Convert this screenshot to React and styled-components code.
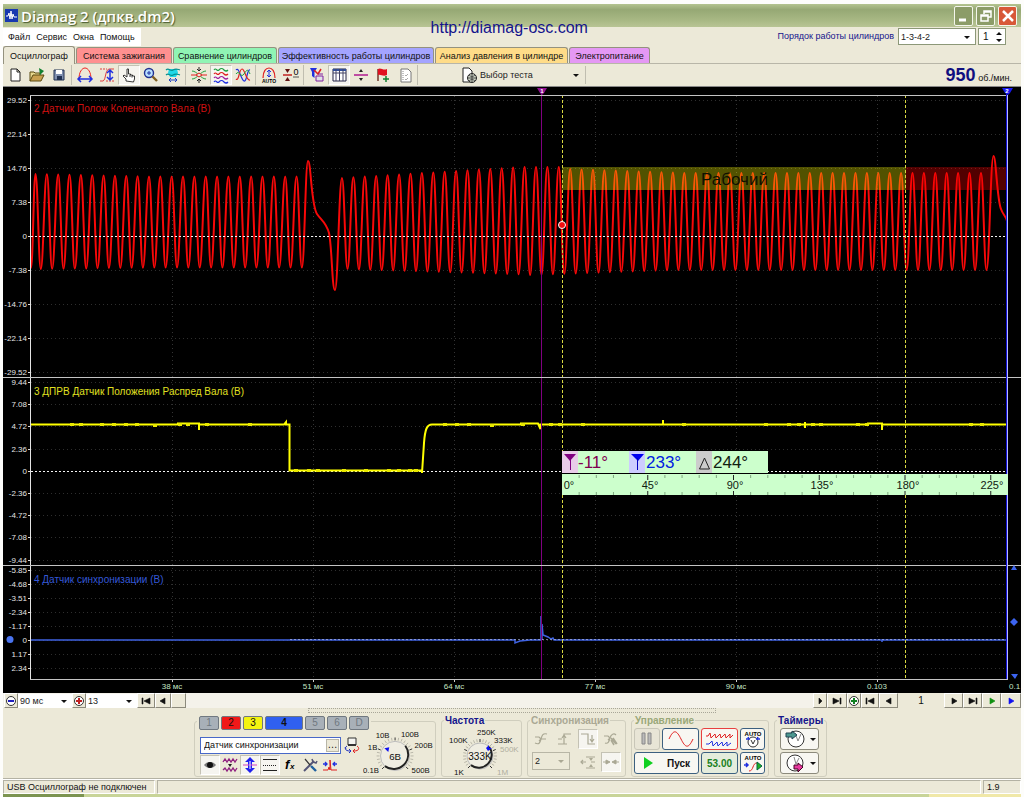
import React, { useState } from "react";
import styled, { createGlobalStyle } from "styled-components";

const GlobalStyle = createGlobalStyle`
  * {
    box-sizing: border-box;
  }
  body {
    margin: 0;
    background: #fdfdfb;
    font-family: "Liberation Sans", sans-serif;
    font-size: 10px;
    color: #111;
  }
  button, select, input {
    font-family: inherit;
    font-size: inherit;
    color: inherit;
    margin: 0;
  }
`;

/* ---------- toolbar icons, 18x18 ---------- */

const icons = {
  new: (
    <path d="M5 3h6l3 3v9H5zM11 3v3h3" fill="#fff" stroke="#222" />
  ),
  open: (
    <>
      <path d="M2 15V6h4l1 1h5v3" fill="#e8d890" stroke="#5a4a10" />
      <path d="M2 15l3-6h11l-3 6z" fill="#c8a050" stroke="#5a4a10" />
      <path d="M11 2l5 3-4 4z" fill="#108030" />
    </>
  ),
  save: (
    <>
      <path d="M4 4h10v10H4z" fill="#8090b0" stroke="#203050" />
      <path d="M6 4h6v4H6z" fill="#fff" />
      <path d="M7 10h5v4H7z" fill="#203050" />
    </>
  ),
  fitX: (
    <>
      <path d="M3 13C3 6 6 2 9 2s6 4 6 11" fill="none" stroke="#f02020" />
      <path d="M2 13h14M5 10l-3 3 3 3M13 10l3 3-3 3" fill="none" stroke="#2030e0" strokeWidth="1.5" />
    </>
  ),
  fitY: (
    <>
      <path d="M2 15h3C8 14 7 4 11 3h5" fill="none" stroke="#e04040" />
      <path d="M2 3h7M8 15h8" fill="none" stroke="#e04040" strokeDasharray="2 1" />
      <path d="M12 4v10M9 7l3-3 3 3M9 11l3 3 3-3" fill="none" stroke="#2030e0" strokeWidth="1.5" />
    </>
  ),
  hand: (
    <path
      d="M6 15v-2L3 10l1-1 3 2V3h1.500v5h2v1h2v1h2v3l-1 3zM10 9v2M12 9.500v2"
      fill="#fff"
      stroke="#222"
      strokeWidth="0.9"
    />
  ),
  zoom: (
    <>
      <circle cx="7" cy="7" r="4.500" fill="#b8e0ff" stroke="#203090" strokeWidth="1.400" />
      <path d="M5 7h4M7 5v4" stroke="#2030a0" />
      <path d="M10.500 10.500L15 15" stroke="#806020" strokeWidth="2.400" />
    </>
  ),
  zoomFit: (
    <>
      <path d="M5 3h8l1 4-2 4H6L4 7z" fill="#20d8e8" />
      <path d="M2 4c3-3 4 2 7 0s4-1 7 0M2 9c3-3 4 2 7 0s4-1 7 0" fill="none" stroke="#089090" strokeWidth="1.200" />
      <path d="M5 14h8M7 12l-2 2 2 2M11 12l2 2-2 2" fill="none" stroke="#2040c0" />
    </>
  ),
  center: (
    <>
      <path d="M2 5c5 0 9 8 14 8M2 13c5 0 9-8 14-8" fill="none" stroke="#20a040" />
      <path d="M1 9h5M12 9h5M6 9l3-2 3 2-3 2z" fill="#ece9d8" stroke="#e02020" />
      <path d="M9 1v4M7 3l2 2 2-2M9 17v-4M7 15l2-2 2 2" fill="none" stroke="#222" />
    </>
  ),
  waves: (
    <>
      <path d="M2 4c2-3 3 2 5 0s3-2 5 0 3 1 4 0" fill="none" stroke="#20a040" strokeWidth="1.200" />
      <path d="M2 8c2-3 3 2 5 0s3-2 5 0 3 1 4 0" fill="none" stroke="#e02020" strokeWidth="1.200" />
      <path d="M2 12c2-3 3 2 5 0s3-2 5 0 3 1 4 0" fill="none" stroke="#a020a0" strokeWidth="1.200" />
      <path d="M2 16c2-3 3 2 5 0s3-2 5 0 3 1 4 0" fill="none" stroke="#2030e0" strokeWidth="1.200" />
    </>
  ),
  overlap: (
    <>
      <path d="M2 4c3-4 5 10 8 11s3-12 6-11" fill="none" stroke="#2030e0" strokeWidth="1.200" />
      <path d="M2 13c3 3 3-10 6-10s4 12 8 11" fill="none" stroke="#e02020" strokeWidth="1.200" />
      <path d="M2 8c3-5 5 5 8 0s4-5 6 0" fill="none" stroke="#20a040" />
    </>
  ),
  auto: (
    <>
      <path d="M3 12c0-7 3-10 6-10s6 3 6 10" fill="none" stroke="#e02020" strokeWidth="1.200" />
      <path d="M9 4v7M7 6l2-2 2 2M7 9l2 2 2-2" fill="none" stroke="#2030e0" />
      <text x="9" y="17" fontSize="5" fontWeight="700" textAnchor="middle">AUTO</text>
    </>
  ),
  zero: (
    <>
      <path d="M1 9h9" stroke="#c02020" strokeWidth="1.500" />
      <path d="M3 3h5L5.500 7zM3 15h5l-2.500-4z" fill="#601010" />
      <text x="14" y="9" fontSize="9" textAnchor="middle">0</text>
      <path d="M11 11h6" stroke="#555" />
    </>
  ),
  filter: (
    <>
      <path d="M2 2h7L6.500 6v6L4 10V6z" fill="#2030e0" />
      <path d="M6 4l4 4 3-5" fill="none" stroke="#e02020" strokeWidth="1.500" />
      <path d="M8 10h7v5H8zM10 8h5" fill="#e0e0e8" stroke="#8020a0" />
    </>
  ),
  table: (
    <>
      <path d="M3 3h13v12H3z" fill="#fff" stroke="#224" />
      <path d="M3 4h13" stroke="#3050a0" strokeWidth="2" />
      <path d="M6 3v12M9.500 3v12M13 3v12M3 7h13" stroke="#446" />
    </>
  ),
  split: (
    <>
      <path d="M2 9h14" stroke="#b01890" strokeWidth="1.500" />
      <path d="M7 6l2-3 2 3zM7 12l2 3 2-3z" fill="#222" />
    </>
  ),
  flag: (
    <>
      <path d="M4 3v12" stroke="#602010" strokeWidth="1.300" />
      <path d="M4 3c3-2 5 2 9 0v6c-4 2-6-1-9 0z" fill="#e01020" />
      <path d="M12 10v6M9 13h6" stroke="#108030" strokeWidth="1.500" />
    </>
  ),
  report: (
    <>
      <path d="M5 3h7l3 3v10H5z" fill="#fff" stroke="#777" />
      <path d="M7 5v10" stroke="#888" strokeDasharray="1 1" />
      <path d="M9 9l1 1 2-2M9 13l1 1 2-2" fill="none" stroke="#aaa" />
    </>
  ),
  test: (
    <>
      <path d="M3 2h6l3 3v11H3z" fill="#fff" stroke="#222" />
      <circle cx="12" cy="12" r="4.500" fill="#ccd2c4" stroke="#222" />
      <path d="M7.500 12h9M12 7.500v9M9 9c2 2 4 2 6 0M9 15c2-2 4-2 6 0" fill="none" stroke="#333" strokeWidth="0.8" />
    </>
  ),
  eye: (
    <>
      <path d="M3 9c3-4 9-4 12 0-3 4-9 4-12 0z" fill="#777" />
      <circle cx="9" cy="9" r="3" fill="#111" />
    </>
  ),
  envelope: (
    <>
      <path d="M2 6l2-3 2 3 2-3 2 3 2-3 2 3 2-3M2 14l2-2 2 3 2-3 2 3 2-3 2 3 2-3" fill="none" stroke="#902080" strokeWidth="1.300" />
      <path d="M7 8h4l-2 3z" fill="#222" />
    </>
  ),
  invert: (
    <>
      <path d="M9 1l5 5h-3v6h3l-5 5-5-5h3V6H4z" fill="#2020f0" />
      <path d="M2 9h14" stroke="#d040c0" />
      <path d="M9 5v8" stroke="#fff" />
    </>
  ),
  lines: (
    <>
      <path d="M2 3.500h14M2 14.500h14" stroke="#222" />
      <path d="M2 9.500h14" stroke="#222" strokeDasharray="1 1" />
    </>
  ),
  fx: (
    <>
      <text x="4" y="13" fontSize="13" fontStyle="italic" fontWeight="700">f</text>
      <text x="9" y="13" fontSize="8" fontStyle="italic" fontWeight="700">x</text>
    </>
  ),
  tools: (
    <>
      <path d="M3 15L13 5" stroke="#557" strokeWidth="2" />
      <path d="M11 3l1 3 3 1 1-2" fill="none" stroke="#557" strokeWidth="1.500" />
      <path d="M4 3l5 6" stroke="#333" strokeWidth="1.200" />
      <path d="M10 10l5 5" stroke="#2060a0" strokeWidth="2.400" />
    </>
  ),
  pulse: (
    <>
      <path d="M2 14h5l1-3 1 3V4l1 10h6" fill="none" stroke="#e02020" />
      <path d="M2 8h4M4 6l2 2-2 2M12 8h4M14 6l-2 2 2 2" fill="none" stroke="#2030e0" strokeWidth="1.300" />
    </>
  ),
  swap: (
    <>
      <path d="M5 2h8v7H5z" fill="#f4f4f0" stroke="#333" />
      <path d="M5 9h8" stroke="#333" strokeWidth="2" />
      <path d="M7 15c-5 0-6-3-3-5M3 13l-1-2M6 13l2 2-2 2" fill="none" stroke="#2030c0" />
      <path d="M11 15c5 0 6-3 3-5M12 13l-2 2 2 2" fill="none" stroke="#e02020" />
    </>
  ),
  syncFree: (
    <path d="M2 7h4l2 2-2 2M2 13c4 2 5 0 6-4s2-6 6-5M7 9h6" fill="none" stroke="#aaa894" strokeWidth="1.200" />
  ),
  syncUp: (
    <path d="M2 14h6V4h7M8 4v10M4 14h7M6 8l2-3 2 3M2 9h4" fill="none" stroke="#aaa894" strokeWidth="1.200" />
  ),
  syncDown: (
    <path d="M2 4h7v10h7M13 5v7M11 9l2 3 2-3" fill="none" stroke="#aaa894" strokeWidth="1.200" />
  ),
  syncAny: (
    <>
      <path d="M2 6h4l2 2-2 2M3 13c3 1 4-1 5-5s4-5 6-3" fill="none" stroke="#aaa894" strokeWidth="1.200" />
      <path d="M9 8l5 6M11 8l4 6M9 10l3 5" stroke="#aaa894" strokeWidth="1.500" />
    </>
  ),
  syncLevel: (
    <>
      <path d="M2 9h5M4 7L2 9l2 2M7 4h9M7 15h9M12 9h4" fill="none" stroke="#aaa894" strokeWidth="1.200" />
      <path d="M10 5h4l-2 3zM10 14h4l-2-3z" fill="#aaa894" />
    </>
  ),
  syncJoin: (
    <path d="M1 9h3M4 7l4 2-4 2zM17 9h-3M14 7l-4 2 4 2z" fill="#aaa894" stroke="#aaa894" />
  ),
};

function Icon({ name }) {
  return (
    <svg width="18" height="18" viewBox="0 0 18 18" aria-hidden="true">
      {icons[name]}
    </svg>
  );
}

/* ---------- scope drawing ---------- */

// Crankshaft signal: a list of extremes joined by half-sine bends
const crankPath = () => {
  let x = 31;
  let y = 268;
  let d = `M${x} ${y}`;
  const to = (nx, ny) => {
    const mid = (nx - x) * 0.42;
    d += `C${(x + mid).toFixed(1)} ${y} ${(nx - mid).toFixed(1)} ${ny} ${nx.toFixed(1)} ${ny}`;
    x = nx;
    y = ny;
  };
  for (let i = 0; i < 24; i++) {
    to(35.5 + i * 11.35, 174 + Math.min(i, 10) * 0.25);
    to(40.8 + i * 11.35, 269 - Math.min(i, 10) * 0.15);
  }
  to(308, 161);
  d += "C311 161 311 205 317 214C321 220 326 222 329 233C332 246 332 290 335 290";
  x = 335;
  y = 290;
  for (let i = 0; i < 57; i++) {
    const px = 342 + i * 11.41;
    const top = i < 16 ? 178 - i * 0.7 : i < 20 ? 167 : Math.min(173, 169 + (i - 20) * 0.4);
    const low = i < 16 ? 269 + i * 0.35 : Math.max(270, 275 - (i - 16) * 0.4);
    to(px, top);
    to(px + 5.5, low);
  }
  to(993.5, 156);
  d += "C996 156 997 200 1001 209C1003 215 1006 216 1007 221";
  return d;
};

const camPath =
  "M31 424.500H178V423.500H199V430V424.500H284L286 422V424.500H289.500V470.500H422V473L424 443C425 429 427 424.500 432 424.500" +
  "H521V423.500H538L540.500 429V424.500H663V420V424.500H805V422V428V424.500H868V423.500H882V430V424.500H1007";

// short ticks of noise on the camshaft signal
const camNoise = [
  [70, 424], [79, 424], [100, 424], [112, 424], [124, 424], [135, 424], [153, 425], [178, 424], [186, 424], [205, 424],
  [248, 424], [294, 470], [307, 470], [316, 470], [342, 470], [364, 470], [387, 470], [397, 470], [408, 470], [414, 470],
  [443, 424], [455, 424], [467, 424], [490, 425], [521, 424], [549, 424], [558, 424], [581, 424], [682, 424], [764, 424],
  [787, 424], [797, 424], [811, 424], [819, 424], [856, 424], [865, 424], [969, 424], [980, 424],
];

const lanes = [
  {
    y: 99.5,
    step: 34.1,
    labels: ["29.52", "22.14", "14.76", "7.38", "0", "-7.38", "-14.76", "-22.14", "-29.52"],
  },
  {
    y: 382,
    step: 22.2,
    labels: ["9.44", "7.08", "4.72", "2.36", "0", "-2.36", "-4.72", "-7.08", "-9.44"],
  },
  {
    y: 569.5,
    step: 14,
    labels: ["-5.85", "-4.68", "-3.51", "-2.34", "-1.17", "0", "1.17", "2.34"],
  },
];

const times = [
  [172, "38 мс"],
  [313, "51 мс"],
  [454, "64 мс"],
  [595, "77 мс"],
  [736, "90 мс"],
  [877, "0.103"],
];

function Scope() {
  return (
    <ScopeSvg viewBox="3 87 1018 606" role="img" aria-label="Осциллограмма">
      <rect x="3" y="87" width="1018" height="606" fill="#000" />

      {lanes.map((lane) =>
        lane.labels.map((label, i) => {
          const y = Math.round(lane.y + lane.step * i);
          return (
            <g key={label + lane.y}>
              <path d={`M31 ${y + 0.5}H1007`} stroke="#2e2e2e" strokeDasharray="1 3" />
              <path d={`M28 ${y + 0.5}H31`} stroke="#ddd" />
              <text x="27" y={y + 3} fontSize="8" fill="#e4e4e4" textAnchor="end">{label}</text>
            </g>
          );
        })
      )}
      {times.map(([x, label]) => (
        <g key={label}>
          <path d={`M${x + 0.5} 96V679`} stroke="#343434" strokeDasharray="1 3" />
          <path d={`M${x + 0.5} 679v3`} stroke="#ccc" />
          <text x={x} y="689" fontSize="8" fill="#c4e4c4" textAnchor="middle">{label}</text>
        </g>
      ))}
      <text x="1009" y="689" fontSize="8" fill="#c4e4c4">0.1</text>

      <path d={crankPath()} fill="none" stroke="#f80808" strokeWidth="2" strokeLinejoin="round" />
      <path d="M31 236.500H1007M31 471.500H1007" stroke="#f4f4f4" strokeDasharray="2 2" />

      <path d={camPath} fill="none" stroke="#ff0" strokeWidth="2" />
      {camNoise.map(([x, y]) => (
        <rect key={x} x={x} y={y - 1} width="4" height="3" fill="#e8e800" />
      ))}
      <path
        d="M31 640H515v3l5-2 10-1h11V616l1 24V624l1 11 5 2 3 2 2-1 1 2H882v2v-2H1007"
        fill="none"
        stroke="#3f62e0"
        strokeWidth="1.500"
      />
      <path d="M290 639.500H1007" stroke="#c4ccf4" strokeWidth="0.6" strokeDasharray="2 2" />

      <rect x="562" y="167" width="344" height="23" fill="#ff0" fillOpacity="0.32" />
      <rect x="906" y="167" width="102" height="23" fill="#f00" fillOpacity="0.32" />
      <text x="701" y="185" fontSize="17" fill="#101000">Рабочий</text>

      <path d="M562.500 95V679M905.500 95V679" stroke="#d8d840" strokeDasharray="3 2" />
      <path d="M541.500 92V679" stroke="#800080" />
      <path d="M537 88h10l-3 5-2 2-2-2z" fill="#901090" />
      <text x="542" y="93" fontSize="6" fontWeight="700" fill="#fff" textAnchor="middle">1</text>

      <path d="M30.500 679V95" stroke="#e4e4e4" />
      <path d="M30 95.500H1007M3 377.500H1021M3 565.500H1021M30 679.500H1008" stroke="#c4c4c4" />
      <path d="M1006.500 92V679" stroke="#1010d8" />
      <path d="M1007.500 95V679" stroke="#b8b8ff" />
      <path d="M1002 88h11l-3 5-2 2-3-2z" fill="#1818f0" />
      <text x="1007" y="93" fontSize="6" fontWeight="700" fill="#fff" textAnchor="middle">2</text>

      <circle cx="562" cy="225" r="3.500" fill="#f01010" stroke="#fff" />
      <circle cx="10" cy="639.500" r="3.500" fill="#4a74f0" />
      <path d="M1014 565l3 5h-6zM1014 618l4 4-4 4-4-4zM1011 674h7l-3 5z" fill="#3c64f0" />

      <LaneTitle x="34" y="112" fill="#d01010">2 Датчик Полож Коленчатого Вала (В)</LaneTitle>
      <LaneTitle x="34" y="395" fill="#e0e020">3 ДПРВ Датчик Положения Распред Вала (В)</LaneTitle>
      <LaneTitle x="34" y="583" fill="#3458d8">4 Датчик синхронизации (В)</LaneTitle>

      <Readings />
      <Ruler />
    </ScopeSvg>
  );
}

function Readings() {
  return (
    <g fontSize="17">
      <rect x="562" y="451" width="206" height="22" fill="#ccffcc" />
      <rect x="562" y="451" width="16" height="22" fill="#e8cce8" />
      <path d="M564 454h12l-6 7z" fill="#800080" />
      <path d="M570.500 458v12" stroke="#800080" />
      <text x="578" y="468" fill="#800050">-11°</text>
      <rect x="629" y="451" width="16" height="22" fill="#ccccff" />
      <path d="M631 454h13l-6 7z" fill="#0000f0" />
      <path d="M637.500 458v12" stroke="#0000c0" />
      <text x="646" y="468" fill="#0020e0">233°</text>
      <rect x="696" y="451" width="16" height="22" fill="#ccc" />
      <path d="M704.500 458l5 11h-10z" fill="none" stroke="#222" />
      <text x="713" y="468" fill="#102010">244°</text>
    </g>
  );
}

function Ruler() {
  const ticks = [];
  for (let i = 1; i < 26; i++) ticks.push(562 + i * 17.15);
  return (
    <g fontSize="11" fill="#102010" textAnchor="middle">
      <rect x="562" y="474" width="446" height="21" fill="#ccffcc" />
      {ticks.map((x, i) => (
        <path
          key={x}
          d={(i + 1) % 5 ? `M${x} 475v3M${x} 495v-3` : `M${x} 475v5M${x} 495v-4`}
          stroke={(i + 1) % 5 ? "#80a880" : "#222"}
        />
      ))}
      <text x="569" y="489">0°</text>
      <text x="650" y="489">45°</text>
      <text x="735" y="489">90°</text>
      <text x="822" y="489">135°</text>
      <text x="908" y="489">180°</text>
      <text x="992" y="489">225°</text>
    </g>
  );
}

/* ---------- knobs ---------- */

function Knob({ width, height, cx, cy, r, value, marks, pointer }) {
  return (
    <svg width={width} height={height} viewBox={`0 0 ${width} ${height}`} role="img" aria-label={value}>
      {Array.from({ length: 25 }, (_, i) => {
        const a = ((135 + i * 11.25) * Math.PI) / 180;
        return (
          <path
            key={i}
            d={`M${cx + Math.cos(a) * (r + 1)} ${cy + Math.sin(a) * (r + 1)}L${cx + Math.cos(a) * (r + 4)} ${cy + Math.sin(a) * (r + 4)}`}
            stroke={i % 6 ? "#b8b6a8" : "#333"}
          />
        );
      })}
      <circle cx={cx} cy={cy} r={r} fill="#efede2" stroke="#bbb" />
      <path
        d={`M${cx - r * 0.7} ${cy + r * 0.7}A${r} ${r} 0 0 0 ${cx + r * 0.7} ${cy - r * 0.7}`}
        fill="none"
        stroke="#222"
        strokeWidth="2"
      />
      <path d={pointer} fill="#1010f0" />
      <text x={cx} y={cy + 4} fontSize="10" textAnchor="middle" fill="#111">{value}</text>
      {marks.map(([x, y, label, off]) => (
        <text key={label} x={x} y={y} fontSize="8" fill={off ? "#b0ae9e" : "#111"}>{label}</text>
      ))}
    </svg>
  );
}

const tabs = [
  { label: "Осциллограф", width: 72, color: "#ece9d8" },
  { label: "Система зажигания", width: 96, color: "#ff9090" },
  { label: "Сравнение цилиндров", width: 104, color: "#90f4b4" },
  { label: "Эффективность работы цилиндров", width: 156, color: "#a4a4ff" },
  { label: "Анализ давления в цилиндре", width: 133, color: "#ffdc88" },
  { label: "Электропитание", width: 81, color: "#e498f4" },
];

const toolGroups = [
  ["new", "open", "save"],
  ["fitX", "fitY", "hand", "zoom", "zoomFit"],
  ["center", "waves", "overlap"],
  ["auto", "zero"],
  ["filter", "table", "split", "flag", "report"],
];

const channels = [
  { label: "1", color: "#a8b0b8" },
  { label: "2", color: "#f01818", on: true },
  { label: "3", color: "#f4f410", on: true },
  { label: "4", color: "#3060f0", on: true, wide: true },
  { label: "5", color: "#a8b0b8" },
  { label: "6", color: "#a8b0b8" },
  { label: "D", color: "#a8b0b8" },
];

const arrows = {
  first: "M1 2h1v6H1zM9 2v6L3 5z",
  prev: "M7 2v6L2 5z",
  next: "M3 2v6l5-3z",
  step: "M4 2v6l3-3z",
  last: "M1 2v6l6-3zM8 2h1v6H8z",
};

function Nav({ shape, width, color = "#111", label }) {
  return (
    <NavButton $width={width} aria-label={label}>
      <svg width="10" height="10" viewBox="0 0 10 10">
        <path d={arrows[shape]} fill={color} stroke={color} strokeWidth="0.6" />
      </svg>
    </NavButton>
  );
}

function Round({ sign, color, label }) {
  return (
    <NavButton $width={14} aria-label={label}>
      <svg width="12" height="12" viewBox="0 0 12 12">
        <circle cx="6" cy="6" r="4.500" fill="#fff" stroke="#333" />
        <path d={sign === "+" ? "M3 6h6M6 3v6" : "M3 6h6"} stroke={color} strokeWidth="2" />
      </svg>
    </NavButton>
  );
}

export default function App() {
  const [tab, setTab] = useState("Осциллограф");
  const [channelName, setChannelName] = useState("Датчик синхронизации");

  return (
    <Window>
      <GlobalStyle />

      <TitleBar>
        <svg width="13" height="13" viewBox="0 0 13 13" aria-hidden="true">
          <rect width="13" height="13" fill="#1838b0" />
          <path d="M1 7h2l1-3 1 6 1-8 1 8 1-5 1 3h3" fill="none" stroke="#fff" />
        </svg>
        <Title>Diamag 2 (дпкв.dm2)</Title>
        <WindowButton aria-label="Свернуть">
          <svg width="18" height="18"><path d="M4 13h7" stroke="#fff" strokeWidth="3" /></svg>
        </WindowButton>
        <WindowButton aria-label="Восстановить">
          <svg width="18" height="18">
            <path d="M7 7V4h7v6h-3M4 8h7v6H4zM7 5h7M4 9h7" fill="none" stroke="#fff" strokeWidth="1.500" />
          </svg>
        </WindowButton>
        <WindowButton $close aria-label="Закрыть">
          <svg width="18" height="18"><path d="M4 4l10 10M14 4L4 14" stroke="#fff" strokeWidth="2.500" /></svg>
        </WindowButton>
        <SiteLink href="http://diamag-osc.com">http://diamag-osc.com</SiteLink>
      </TitleBar>

      <MenuRow>
        <Menu>
          <MenuItem>Файл</MenuItem>
          <MenuItem>Сервис</MenuItem>
          <MenuItem>Окна</MenuItem>
          <MenuItem>Помощь</MenuItem>
        </Menu>
        <OrderLabel htmlFor="order">Порядок работы цилиндров</OrderLabel>
        <SelectBox $width={78} $height={17} $border>
          <select id="order"><option>1-3-4-2</option></select>
        </SelectBox>
        <Spinner>
          <input aria-label="Цилиндр" defaultValue="1" />
          <svg width="8" height="12" viewBox="0 0 8 12"><path d="M1 4l3-3 3 3zM1 8l3 3 3-3z" fill="#111" /></svg>
        </Spinner>
      </MenuRow>

      <TabRow role="tablist">
        {tabs.map((t) => (
          <Tab
            key={t.label}
            role="tab"
            aria-selected={tab === t.label}
            $active={tab === t.label}
            $width={t.width}
            $color={t.color}
            onClick={() => setTab(t.label)}
          >
            {t.label}
          </Tab>
        ))}
      </TabRow>

      <Toolbar>
        {toolGroups.map((group) => (
          <ToolGroup key={group[0]}>
            {group.map((name) => (
              <ToolButton key={name} aria-label={name} $pressed={["hand", "waves", "table"].includes(name)}>
                <Icon name={name} />
              </ToolButton>
            ))}
          </ToolGroup>
        ))}
        <TestPicker>
          <Icon name="test" />
          <SelectBox $width={106} $height={18}>
            <select aria-label="Тест"><option>Выбор теста</option></select>
          </SelectBox>
        </TestPicker>
        <Rpm><b>950</b> об./мин.</Rpm>
      </Toolbar>

      <Scope />

      <ScrollRow>
        <Round sign="-" color="#2020c0" label="Сжать" />
        <SelectBox $width={54} $height={14}>
          <select aria-label="Развёртка"><option>90 мс</option></select>
        </SelectBox>
        <Round sign="+" color="#c02020" label="Растянуть" />
        <SelectBox $width={51} $height={14}>
          <select aria-label="Масштаб"><option>13</option></select>
        </SelectBox>
        <Nav shape="first" width={18} label="В начало" />
        <Nav shape="prev" width={16} label="Назад" />
        <Thumb />
        <Track />
        <Nav shape="step" width={14} label="Вперёд" />
        <Nav shape="last" width={20} label="В конец" />
        <Round sign="+" color="#108020" label="Добавить кадр" />
        <Nav shape="first" width={18} label="Первый кадр" />
        <Nav shape="prev" width={19} label="Предыдущий кадр" />
        <Frame>1</Frame>
        <Nav shape="next" width={19} label="Следующий кадр" />
        <Nav shape="last" width={19} label="Последний кадр" />
        <Nav shape="next" width={19} color="#109010" label="Воспроизвести" />
        <Nav shape="next" width={20} color="#1010f0" label="Воспроизвести всё" />
      </ScrollRow>

      <Panel>
        <Splitter />
        <Groups>
          <Group $width={242}>
            <ChannelLegend>
              {channels.map((c) => (
                <ChannelButton key={c.label} $color={c.color} $on={c.on} $wide={c.wide}>
                  {c.label}
                </ChannelButton>
              ))}
            </ChannelLegend>
            <ChannelBody>
              <ChannelTools>
                <Row>
                  <NameField>
                    <input
                      aria-label="Имя канала"
                      value={channelName}
                      onChange={(e) => setChannelName(e.target.value)}
                    />
                    <button aria-label="Выбрать датчик">…</button>
                  </NameField>
                  <ToolButton aria-label="swap"><Icon name="swap" /></ToolButton>
                </Row>
                <Row>
                  {["eye", "envelope", "invert", "lines", "fx", "tools", "pulse"].map((name) => (
                    <ToolButton key={name} aria-label={name} $small $pressed={["eye", "invert", "lines"].includes(name)}>
                      <Icon name={name} />
                    </ToolButton>
                  ))}
                </Row>
              </ChannelTools>
              <Knob
                width={72}
                height={48}
                cx={33}
                cy={26}
                r={15}
                value="6В"
                pointer="M22 18l5-1-1 5z"
                marks={[[13, 8, "10В"], [39, 6, "100В"], [5, 20, "1В"], [53, 18, "200В"], [0, 44, "0.1В"], [50, 44, "500В"]]}
              />
            </ChannelBody>
          </Group>

          <Group $width={81}>
            <Legend>Частота</Legend>
            <Knob
              width={76}
              height={50}
              cx={36}
              cy={28}
              r={13}
              value="333K"
              pointer="M42 20l3-3v3h3l-4 3z"
              marks={[[33, 7, "250K"], [5, 15, "100K"], [50, 15, "333K"], [56, 24, "500K", true], [10, 47, "1K"], [53, 47, "1M", true]]}
            />
          </Group>

          <Group $width={99}>
            <Legend $muted>Синхронизация</Legend>
            <SyncGrid>
              {["syncFree", "syncUp", "syncDown", "syncAny"].map((name) => (
                <ToolButton key={name} aria-label={name} disabled $small $pressed={name === "syncDown"}>
                  <Icon name={name} />
                </ToolButton>
              ))}
              <SelectBox $width={38} $height={18} $disabled>
                <select aria-label="Канал синхронизации" disabled><option>2</option></select>
              </SelectBox>
              <ToolButton aria-label="syncLevel" disabled $small><Icon name="syncLevel" /></ToolButton>
              <ToolButton aria-label="syncJoin" disabled $small $pressed><Icon name="syncJoin" /></ToolButton>
            </SyncGrid>
          </Group>

          <Group $width={138}>
            <Legend $muted="#9aa878">Управление</Legend>
            <ControlGrid>
              <PushButton disabled $plain aria-label="Пауза">
                <svg width="12" height="14"><path d="M1 1h3v11H1zM7 1h3v11H7z" fill="#bbb" stroke="#888" /></svg>
              </PushButton>
              <PushButton aria-label="Один канал">
                <svg width="28" height="18"><path d="M2 9C7-2 10 1 14 9s7 11 12 0" fill="none" stroke="#e02020" /></svg>
              </PushButton>
              <PushButton $border="#e84040" aria-label="Самописец">
                <svg width="32" height="18">
                  <path d="M2 6h2l2-3 1 5 4-4 1 4 4-4 1 4 4-4 1 4 4-4v4l3-3" fill="none" stroke="#e02020" />
                  <path d="M2 14h3l3-3 1 5 4-4 1 4 4-4 1 4 4-4v4l4-3" fill="none" stroke="#2030e0" />
                </svg>
              </PushButton>
              <PushButton aria-label="Авто измерение">
                <svg width="20" height="20">
                  <text x="10" y="7" fontSize="6" fontWeight="700" textAnchor="middle">AUTO</text>
                  <circle cx="10" cy="13" r="5" fill="#fff" stroke="#333" />
                  <path d="M8 11l2 4 2-4" fill="none" stroke="#333" />
                  <path d="M3 10l3 0-1-2M17 10l-3 0 1-2" fill="none" stroke="#2030e0" strokeWidth="1.500" />
                </svg>
              </PushButton>
              <StartButton>
                <svg width="10" height="14"><path d="M1 1l9 6-9 6z" fill="#10d020" /></svg>
                <span>Пуск</span>
              </StartButton>
              <PushButton $value>53.00</PushButton>
              <PushButton aria-label="Авто запуск">
                <svg width="20" height="20">
                  <text x="10" y="7" fontSize="6" fontWeight="700" textAnchor="middle">AUTO</text>
                  <path d="M6 18c5 0 3-8 8-8" fill="none" stroke="#e02020" />
                  <path d="M1 12h4M3 10l2 2-2 2" fill="none" stroke="#2030e0" strokeWidth="1.500" />
                  <path d="M14 9l5 4-5 4z" fill="#20b020" stroke="#064" />
                </svg>
              </PushButton>
            </ControlGrid>
          </Group>

          <Group $width={53}>
            <Legend>Таймеры</Legend>
            <TimerColumn>
              <PushButton $border="#8c8a7c" aria-label="Таймер пуска">
                <svg width="34" height="20">
                  <circle cx="13" cy="10" r="8" fill="#fff" stroke="#333" />
                  <path d="M12 4l3 8 3-7" fill="none" stroke="#888" />
                  <path d="M3 4h6V2l5 4-5 4V8H3z" fill="#4c9890" stroke="#245" />
                  <path d="M27 9h6l-3 3z" fill="#111" />
                </svg>
              </PushButton>
              <PushButton $border="#8c8a7c" aria-label="Таймер остановки">
                <svg width="34" height="20">
                  <circle cx="12" cy="10" r="8" fill="#fff" stroke="#333" />
                  <path d="M11 4l2 7 3-6" fill="none" stroke="#888" />
                  <path d="M11 12h4v-2l5 4-5 5v-3h-4z" fill="#e838a0" stroke="#402" />
                  <path d="M27 9h6l-3 3z" fill="#111" />
                </svg>
              </PushButton>
            </TimerColumn>
          </Group>
        </Groups>
      </Panel>

      <StatusBar>
        <StatusCell $width={152}>USB Осциллограф не подключен</StatusCell>
        <StatusCell $grow />
        <StatusCell $width={38}>1.9</StatusCell>
      </StatusBar>
      <BottomEdge />
    </Window>
  );
}

const Window = styled.div`
  display: flex;
  flex-direction: column;
  margin: 4px 3px 0;
  background: #ece9d8;
`;

const TitleBar = styled.header`
  position: relative;
  display: flex;
  align-items: center;
  gap: 3px;
  height: 23px;
  padding: 0 4px 0 2px;
  background: linear-gradient(#b4c490, #96a874 25%, #a8b884 70%, #b8c494);
`;

const Title = styled.h1`
  flex: 1;
  margin: 0;
  font: 600 15px "Open Sans", sans-serif;
  color: #fff;
  text-shadow: 1px 1px 1px #4c5c30;
`;

const WindowButton = styled.button`
  display: flex;
  width: 19px;
  height: 20px;
  padding: 0;
  border: 1px solid #f4f6ec;
  border-radius: 2px;
  background: ${(props) => (props.$close ? "#d85838" : "#8c9c68")};
`;

const SiteLink = styled.a`
  position: absolute;
  top: 15px;
  left: 42%;
  font-size: 16px;
  color: #14148c;
  text-decoration: none;
`;

const MenuRow = styled.div`
  display: flex;
  align-items: flex-start;
  height: 20px;
  padding: 1px 15px 0 0;
`;

const Menu = styled.nav`
  display: flex;
  flex: 0 0 auto;
  gap: 6px;
  height: 18px;
  padding: 0 6px 0 5px;
  margin-right: auto;
  background: #fff;
`;

const MenuItem = styled.button`
  padding: 0;
  border: none;
  background: none;
  font-size: 9px;
`;

const OrderLabel = styled.label`
  margin-right: 4px;
  font-size: 9px;
  line-height: 17px;
  color: #14148c;
`;

const SelectBox = styled.div`
  position: relative;
  flex: 0 0 auto;
  width: ${(props) => props.$width}px;
  height: ${(props) => props.$height}px;
  border: ${(props) =>
    props.$border ? "1px solid #8c9878" : props.$disabled ? "1px solid #b8b6a6" : "none"};

  select {
    width: 100%;
    height: 100%;
    padding: 0 2px;
    border: none;
    appearance: none;
    background: ${(props) => (props.$border || props.$height === 14 ? "#fff" : "transparent")};
    color: #222;
    font-size: 9px;
    opacity: 1;
  }
  &::after {
    content: "";
    position: absolute;
    right: 5px;
    top: calc(50% - 1px);
    border: 3px solid transparent;
    border-top-color: ${(props) => (props.$disabled ? "#aaa894" : "#111")};
    border-bottom: none;
    pointer-events: none;
  }
`;

const Spinner = styled.div`
  display: flex;
  align-items: center;
  width: 28px;
  height: 17px;
  margin-left: 2px;
  border: 1px solid #8c9878;
  background: #fff;

  input {
    width: 16px;
    padding: 0 4px;
    border: none;
    background: none;
  }
`;

const TabRow = styled.div`
  display: flex;
  align-items: flex-end;
  gap: 1px;
  height: 17px;
  border-bottom: 1px solid #b8b6a8;
`;

const Tab = styled.button`
  width: ${(props) => props.$width}px;
  height: ${(props) => (props.$active ? 18 : 16)}px;
  margin-bottom: ${(props) => (props.$active ? -1 : 0)}px;
  padding: 0;
  border: 1px solid #94927f;
  border-bottom: none;
  border-radius: 3px 3px 0 0;
  background: ${(props) => props.$color};
  font-size: 9px;
  white-space: nowrap;
`;

const Toolbar = styled.div`
  display: flex;
  align-items: center;
  height: 23px;
  padding: 0 9px 0 1px;
  border-bottom: 1px solid #888;
`;

const ToolGroup = styled.div`
  display: flex;
  padding-right: 1px;
  margin-right: 2px;
  border-right: 1px solid #c0beb0;
`;

const ToolButton = styled.button`
  display: flex;
  align-items: center;
  justify-content: center;
  width: ${(props) => (props.$small ? 20 : 22)}px;
  height: 20px;
  padding: 0;
  border: 1px solid;
  border-color: ${(props) => (props.$pressed ? "#c4c2b4 #fff #fff #c4c2b4" : "transparent")};
  background: ${(props) => (props.$pressed ? "#f6f5f0" : "none")};
`;

const TestPicker = styled.div`
  display: flex;
  align-items: center;
  margin-left: 40px;
  padding-right: 1px;
  border-right: 1px solid #c0beb0;
`;

const Rpm = styled.div`
  margin-left: auto;
  font-size: 9px;

  b {
    font-size: 18px;
    color: #101080;
  }
`;

const ScopeSvg = styled.svg`
  display: block;
  width: 100%;
  height: auto;
  font-family: "Liberation Sans", sans-serif;
`;

const LaneTitle = styled.text`
  font-size: 10px;
`;

const ScrollRow = styled.div`
  display: flex;
  align-items: center;
  height: 15px;
  padding-left: 1px;
  background: #f4f2ea;
`;

const NavButton = styled.button`
  display: flex;
  flex: 0 0 auto;
  align-items: center;
  justify-content: center;
  width: ${(props) => props.$width}px;
  height: 15px;
  padding: 0;
  border: 1px solid;
  border-color: #fff #8c8a7c #8c8a7c #fff;
  background: #ece9d8;
`;

const Thumb = styled.div`
  width: 15px;
  height: 15px;
  border: 1px solid;
  border-color: #fff #8c8a7c #8c8a7c #fff;
  background: #ece9d8;
`;

const Track = styled.div`
  flex: 1;
`;

const Frame = styled.div`
  width: 46px;
  height: 15px;
  background: #ece9d8;
  line-height: 15px;
  text-align: center;
`;

const Panel = styled.section`
  padding-bottom: 1px;
  border-bottom: 1px solid #b4b2a4;
`;

const Splitter = styled.div`
  width: 40%;
  height: 5px;
  margin: 0 auto;
  border: 1px dotted #a8a698;
`;

const Groups = styled.div`
  display: flex;
  justify-content: flex-start;
  align-items: stretch;
  gap: 5px;
  height: 64px;
  padding-left: 191px;
`;

const Group = styled.fieldset`
  width: ${(props) => props.$width}px;
  min-width: 0;
  margin: 0;
  padding: 0 2px;
  border: 1px solid #d0cebe;
  border-radius: 3px;
`;

const Legend = styled.legend`
  padding: 0 1px;
  font-size: 10px;
  line-height: 15px;
  font-weight: 700;
  color: ${(props) =>
    props.$muted ? (props.$muted === true ? "#aaa894" : props.$muted) : "#14148c"};
`;

const ChannelLegend = styled.legend`
  display: flex;
  gap: 2px;
  padding: 3px 2px 0;
`;

const ChannelButton = styled.button`
  width: ${(props) => (props.$wide ? 38 : 20)}px;
  height: 14px;
  padding: 0;
  border: 1px solid #707880;
  border-radius: 2px;
  background: ${(props) => props.$color};
  color: ${(props) => (props.$on ? "#111" : "#707880")};
  font-weight: ${(props) => (props.$wide ? 700 : 400)};
  line-height: 12px;
`;

const ChannelBody = styled.div`
  display: flex;
  justify-content: space-between;
`;

const ChannelTools = styled.div`
  padding: 5px 0 0 3px;
`;

const Row = styled.div`
  display: flex;
  align-items: center;
  height: 20px;
`;

const NameField = styled.div`
  display: flex;
  align-items: center;
  width: 141px;
  height: 17px;
  padding: 1px;
  border: 1px solid #4868c8;
  background: #fff;

  input {
    flex: 1;
    min-width: 0;
    padding: 0 2px;
    border: none;
    background: none;
    font-size: 9px;
  }
  button {
    width: 13px;
    height: 13px;
    padding: 0;
    border: 1px solid #b8b6a8;
    background: #ece9d8;
    line-height: 6px;
  }
`;

const SyncGrid = styled.div`
  display: grid;
  grid-template-columns: repeat(4, 20px);
  gap: 3px;
  padding: 1px 2px;

  > div {
    grid-column: span 2;
  }
`;

const ControlGrid = styled.div`
  display: grid;
  grid-template-columns: 26px 37px 37px 25px;
  gap: 2px;
`;

const PushButton = styled.button`
  display: flex;
  align-items: center;
  justify-content: center;
  height: 22px;
  padding: 0;
  border: 1px solid ${(props) => props.$border || (props.$plain ? "#c8c6b8" : "#3c6080")};
  border-radius: 3px;
  background: ${(props) => (props.$plain ? "#e8e5d6" : props.$value ? "#e4ecdc" : "#f8f7f2")};
  color: #188020;
  font-weight: 700;
  overflow: hidden;
`;

const StartButton = styled(PushButton)`
  grid-column: span 2;
  gap: 14px;
  color: #111;
`;

const TimerColumn = styled.div`
  display: grid;
  grid-template-columns: 39px;
  gap: 2px;
  padding-left: 3px;
`;

const StatusBar = styled.footer`
  display: flex;
  gap: 2px;
  height: 15px;
  border-top: 1px solid #fff;
`;

const StatusCell = styled.div`
  flex: ${(props) => (props.$grow ? "1" : "0 0 auto")};
  width: ${(props) => (props.$width ? props.$width + "px" : "auto")};
  padding-left: 3px;
  border: 1px solid;
  border-color: #b4b2a4 #fff #fff #b4b2a4;
  font-size: 9px;
  line-height: 12px;
  white-space: nowrap;
`;

const BottomEdge = styled.div`
  height: 4px;
  background: linear-gradient(90deg, #7c9450 8%, #c8d498 8%, #c8d498 91%, #f0e8a8 91%);
`;
